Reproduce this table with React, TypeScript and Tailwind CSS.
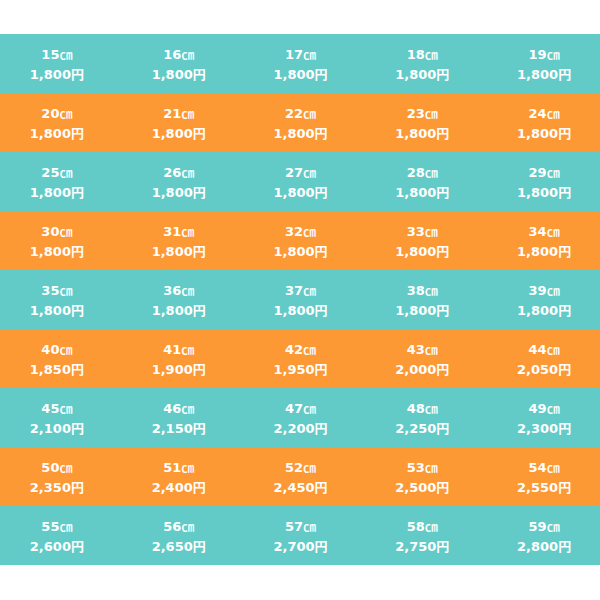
const PRICES: Record<number, string> = {
  40: '1,850', 41: '1,900', 42: '1,950', 43: '2,000', 44: '2,050',
  45: '2,100', 46: '2,150', 47: '2,200', 48: '2,250', 49: '2,300',
  50: '2,350', 51: '2,400', 52: '2,450', 53: '2,500', 54: '2,550',
  55: '2,600', 56: '2,650', 57: '2,700', 58: '2,750', 59: '2,800',
};

/** Size → price table, one band of five sizes per row. */
const rows = Array.from({ length: 9 }, (_, r) => Array.from({ length: 5 }, (_, c) => 15 + r * 5 + c));

function Cell({ size }: { size: number }) {
  return (
    <div className="flex flex-col items-center justify-center leading-[19px]">
      <span>
        {size}
        <span className="font-['Noto_Sans_CJK_JP',sans-serif] font-medium">㎝</span>
      </span>
      <span>
        {PRICES[size] ?? '1,800'}
        <span className="font-['Noto_Sans_CJK_JP',sans-serif]">円</span>
      </span>
    </div>
  );
}

export default function App() {
  return (
    <div className="h-[600px] w-[600px] overflow-hidden bg-white pt-[34px] font-['DejaVu_Sans',Verdana,'Noto_Sans_CJK_JP',sans-serif] text-[13px] font-bold text-white">
      {rows.map((row, i) => (
        <div
          key={i}
          className={`ml-[-4px] grid h-[59px] w-[609px] grid-cols-5 ${i % 2 === 0 ? 'bg-[#62cbc7]' : 'bg-[#fd9935]'}`}
        >
          {row.map((size) => (
            <Cell key={size} size={size} />
          ))}
        </div>
      ))}
    </div>
  );
}
